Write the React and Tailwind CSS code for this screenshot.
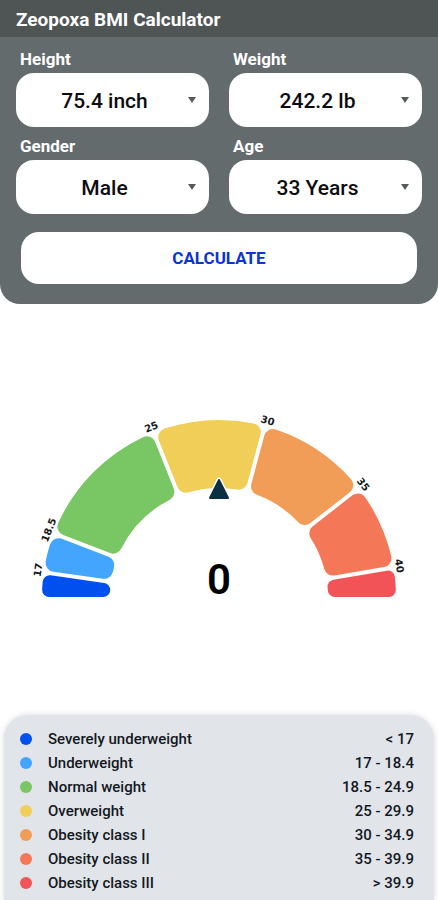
const categories = [
  { label: 'Severely underweight', range: '< 17', color: '#0050f0', from: 0, to: 8 },
  { label: 'Underweight', range: '17 - 18.4', color: '#43a5fd', from: 8, to: 21 },
  { label: 'Normal weight', range: '18.5 - 24.9', color: '#78c664', from: 21, to: 68.3 },
  { label: 'Overweight', range: '25 - 29.9', color: '#f1ce58', from: 68.3, to: 105 },
  { label: 'Obesity class I', range: '30 - 34.9', color: '#f19d57', from: 105, to: 142 },
  { label: 'Obesity class II', range: '35 - 39.9', color: '#f47857', from: 142, to: 170.4 },
  { label: 'Obesity class III', range: '> 39.9', color: '#f25356', from: 170.4, to: 180 },
];

const ticks = [
  { text: '17', angle: 8.5 },
  { text: '18.5', angle: 21.5 },
  { text: '25', angle: 68.3 },
  { text: '30', angle: 105.4 },
  { text: '35', angle: 142 },
  { text: '40', angle: 170.2 },
];

const CX = 219;
const CY = 184;
const OUTER = 177;
const INNER = 109;
const GAP = 4;

// thin end segments have no room for the full corner
function cornerOf({ from, to }) {
  return to - from < 10 ? 7 : 9;
}

// angles run clockwise from the left end of the dial
function point(radius, deg) {
  const a = (deg * Math.PI) / 180;
  return [CX - radius * Math.cos(a), CY - radius * Math.sin(a)];
}

// The outline is inset by the corner radius, the round stroke then fills it back out
function segmentPath({ from, to }, corner) {
  const ro = OUTER - corner;
  const ri = INNER + corner;
  const startInset = corner + (from === 0 ? 0 : GAP / 2);
  const endInset = corner + (to === 180 ? 0 : GAP / 2);
  const inset = (d, r) => (Math.asin(d / r) * 180) / Math.PI;

  const a = point(ro, from + inset(startInset, ro));
  const b = point(ro, to - inset(endInset, ro));
  const innerStart = from + inset(startInset, ri);
  const innerEnd = Math.max(innerStart, to - inset(endInset, ri));
  const c = point(ri, innerEnd);
  const d = point(ri, innerStart);
  return `M${a} A${ro} ${ro} 0 0 1 ${b} L${c} A${ri} ${ri} 0 0 0 ${d} Z`;
}

function Field({ id, label, value }) {
  return (
    <div className="flex flex-col gap-0.5">
      <label htmlFor={id} className="pl-1 text-[17px] leading-6 font-bold text-white">
        {label}
      </label>
      <div className="relative">
        <select
          id={id}
          defaultValue={value}
          className="block h-[54px] w-full appearance-none rounded-[18px] bg-white pt-[3px] pr-7 pl-3 text-center text-[21px] font-medium text-[#0c0c10] [text-align-last:center]"
        >
          <option value={value}>{value}</option>
        </select>
        <svg
          viewBox="0 0 8 6"
          className="pointer-events-none absolute top-6 right-[13px] h-1.5 w-2"
          aria-hidden="true"
        >
          <path d="M0 0h8L4 6z" fill="#555b5c" />
        </svg>
      </div>
    </div>
  );
}

function Gauge({ value }) {
  return (
    <svg viewBox="0 0 438 194" className="w-full" role="img" aria-label={`BMI ${value}`}>
      {categories.map((c) => {
        const corner = cornerOf(c);
        return (
          <path
            key={c.label}
            d={segmentPath(c, corner)}
            fill={c.color}
            stroke={c.color}
            strokeWidth={corner * 2}
            strokeLinejoin="round"
          />
        );
      })}
      {ticks.map((t) => {
        const [x, y] = point(183, t.angle);
        return (
          <text
            key={t.text}
            x={x}
            y={y}
            transform={`rotate(${t.angle - 90} ${x} ${y})`}
            textAnchor="middle"
            dominantBaseline="central"
            className="fill-[#15181a] font-['DejaVu_Sans',sans-serif] text-[10px] font-bold"
          >
            {t.text}
          </text>
        );
      })}
      <path
        d="M219 67 L228 85 H210 Z"
        fill="#0b3040"
        stroke="#fff"
        strokeWidth="5"
        strokeLinejoin="round"
      />
      <path
        d="M219 67 L228 85 H210 Z"
        fill="#0b3040"
        stroke="#0b3040"
        strokeWidth="2"
        strokeLinejoin="round"
      />
      <text x={CX} y="181" textAnchor="middle" className="fill-black text-[42px] font-semibold">
        {value}
      </text>
    </svg>
  );
}

export default function App() {
  return (
    <div className="flex min-h-screen flex-col bg-white font-[Roboto,sans-serif]">
      <header className="bg-[#4f5455] px-4 pt-2 pb-[5px]">
        <h1 className="text-[19px] leading-6 font-bold text-white">Zeopoxa BMI Calculator</h1>
      </header>

      <form
        className="rounded-b-[20px] bg-[#646b6d] px-4 pt-2.5 pb-5"
        onSubmit={(e) => e.preventDefault()}
      >
        <div className="grid grid-cols-2 gap-x-5 gap-y-[7px]">
          <Field id="height" label="Height" value="75.4 inch" />
          <Field id="weight" label="Weight" value="242.2 lb" />
          <Field id="gender" label="Gender" value="Male" />
          <Field id="age" label="Age" value="33 Years" />
        </div>
        <div className="mt-[18px] px-[5px]">
          <button
            type="submit"
            className="h-[52px] w-full rounded-[18px] bg-white pt-0.5 text-[17px] font-bold text-[#0a35d0]"
          >
            CALCULATE
          </button>
        </div>
      </form>

      <main className="flex flex-1 items-center justify-center">
        <Gauge value={0} />
      </main>

      <section className="mx-1 rounded-t-[24px] bg-[#e1e5ea] px-4 pt-3 pb-[5px] shadow-[0_0_6px_rgba(0,0,0,0.15)]">
        <table className="w-full text-[15px] leading-6 font-medium text-[#14181f]">
          <tbody>
            {categories.map((c) => (
              <tr key={c.label}>
                <td className="w-7 p-0">
                  <span className="block size-3 rounded-full" style={{ background: c.color }} />
                </td>
                <th scope="row" className="p-0 text-left font-medium">{c.label}</th>
                <td className="p-0 pr-1 text-right">{c.range}</td>
              </tr>
            ))}
          </tbody>
        </table>
      </section>
    </div>
  );
}
